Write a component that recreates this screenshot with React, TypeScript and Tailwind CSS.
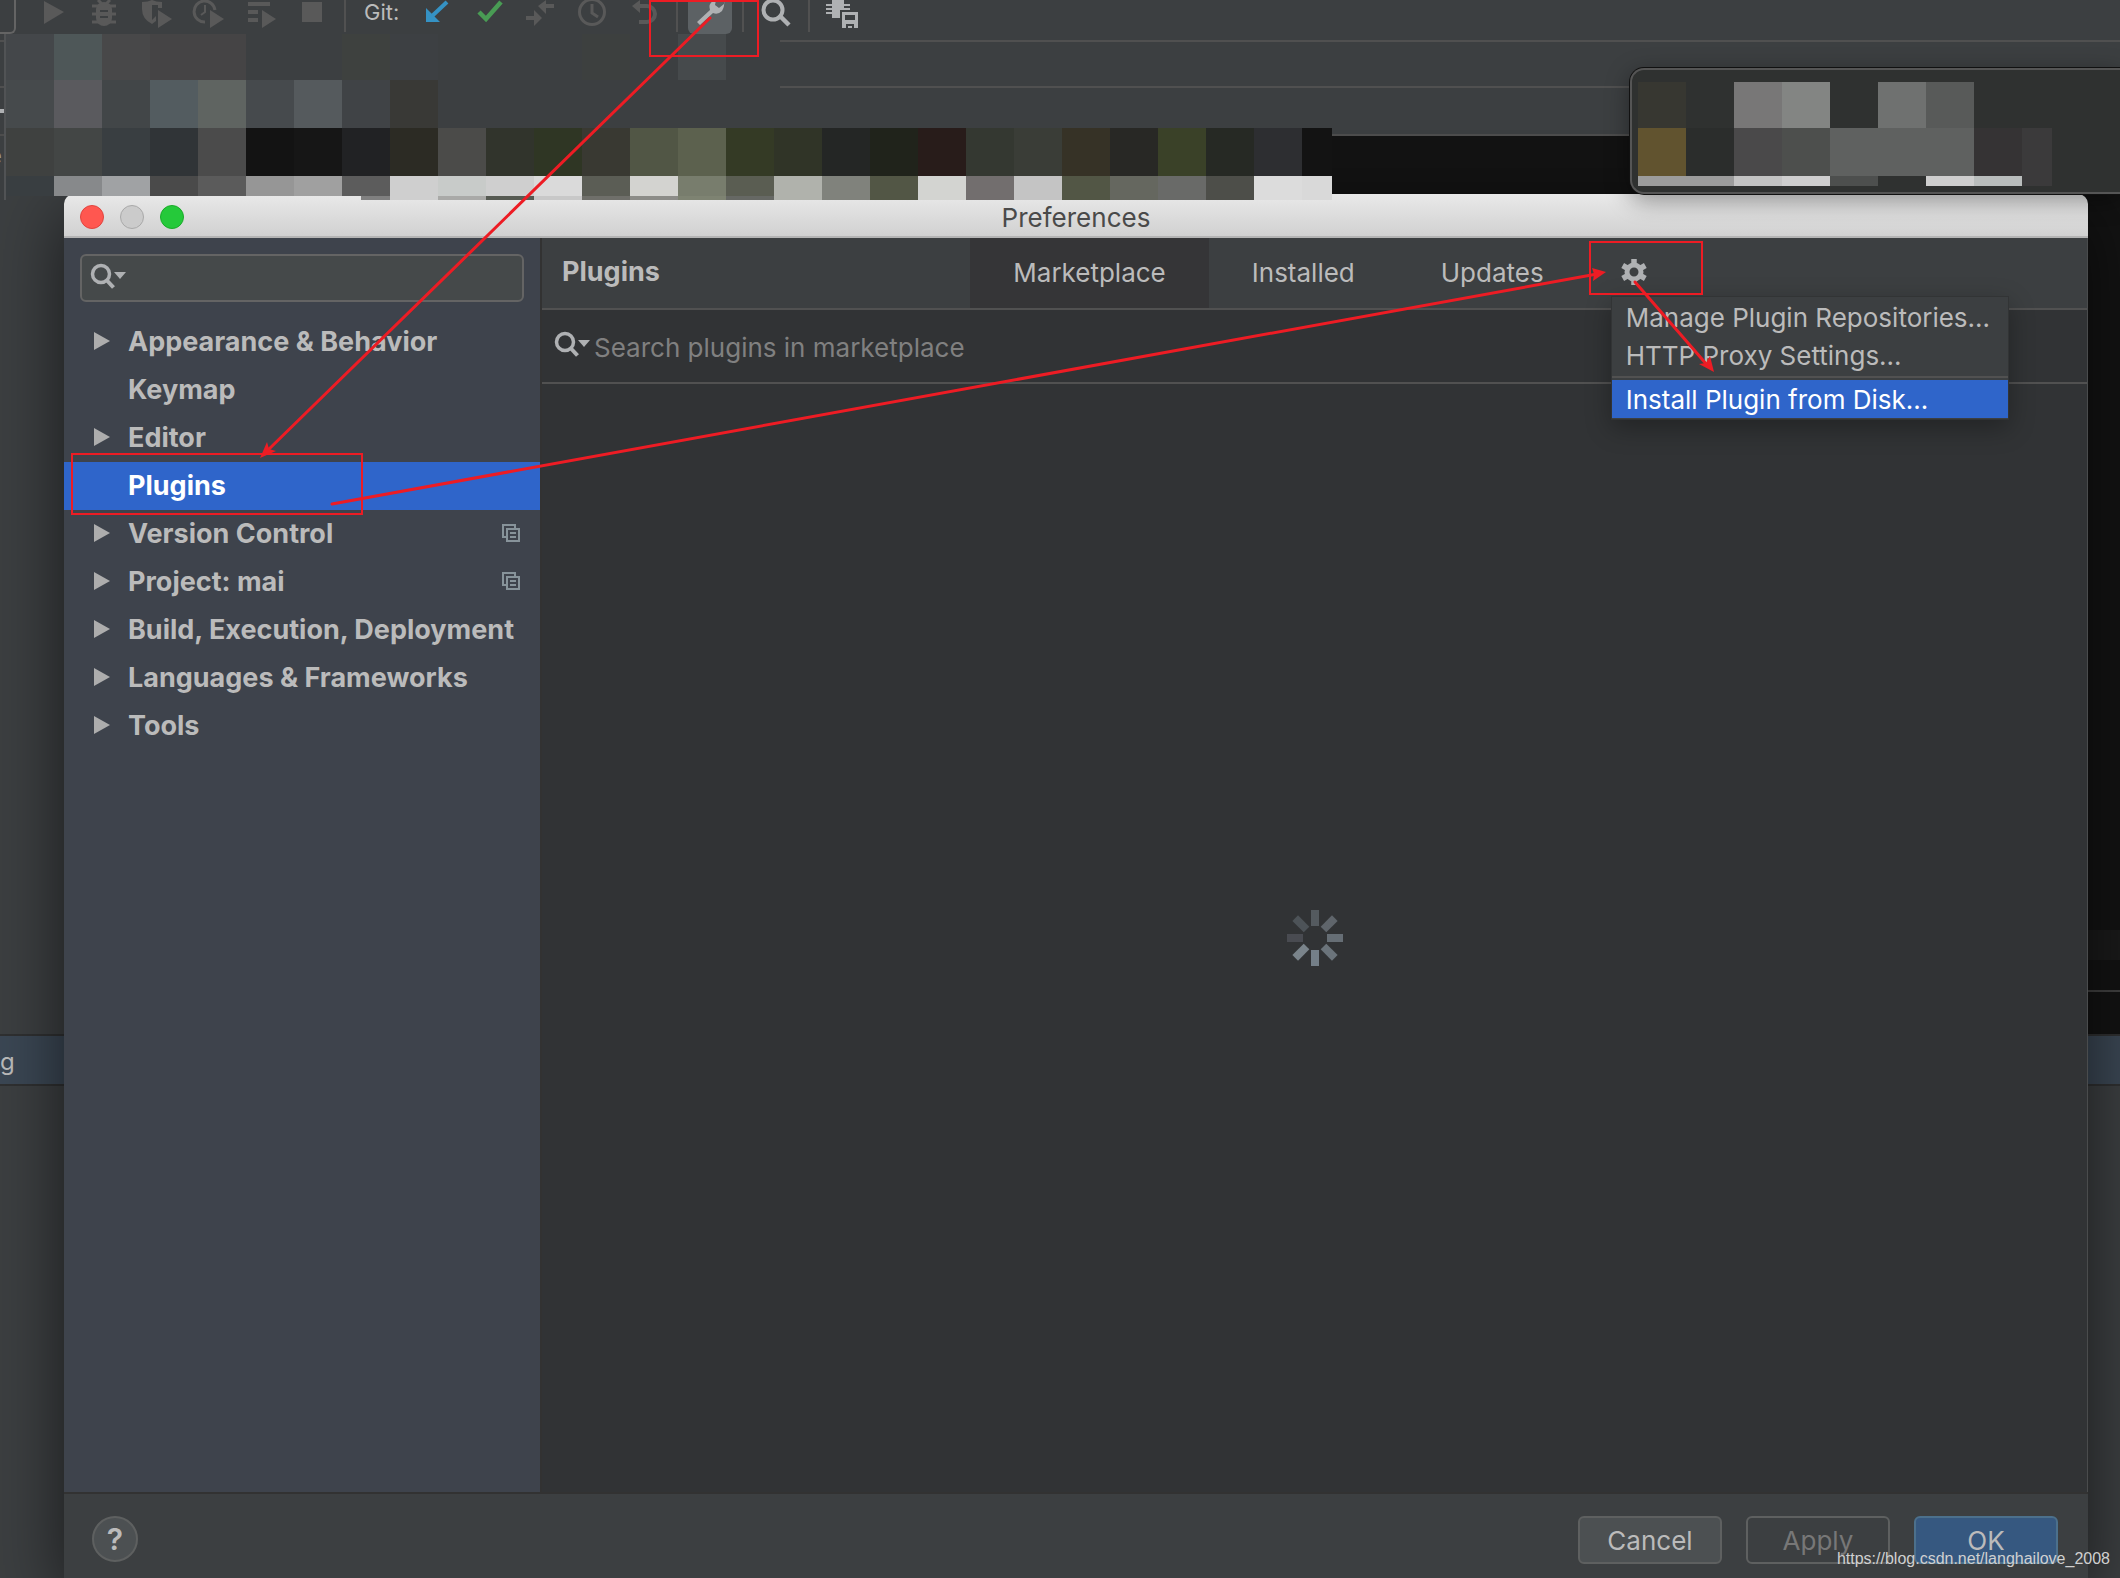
import { useState } from "react";
import type { ReactNode } from "react";

const TREE = [
  { label: "Appearance & Behavior", expandable: true },
  { label: "Keymap" },
  { label: "Editor", expandable: true },
  { label: "Plugins" },
  { label: "Version Control", expandable: true, perProject: true },
  { label: "Project: mai", expandable: true, perProject: true },
  { label: "Build, Execution, Deployment", expandable: true },
  { label: "Languages & Frameworks", expandable: true },
  { label: "Tools", expandable: true },
];

const TABS = ["Marketplace", "Installed", "Updates"];

// Pixelated blocks over the project name and editor tabs
const MOSAIC = [
  {
    height: "h-[46px]",
    cells: [
      "bg-[#44474a]", "bg-[#4e5758]", "bg-[#484849]", "bg-[#454445]", "bg-[#454445]", "bg-[#3c3f41]", "bg-[#3c3f41]",
      "bg-[#3e413f]", "bg-[#3d4043]", "bg-[#3c3f41]", "bg-[#3c3f41]", "bg-[#3c3f41]", "bg-[#3d403f]", "bg-[#3c3f41]",
      "bg-[#464a4c]", "bg-[#3c3f41]", "bg-linear-to-r from-[#3c3f41] from-12% to-transparent to-12%",
    ],
  },
  {
    height: "h-12",
    cells: [
      "bg-[#464a4c]", "bg-[#5a5a5e]", "bg-[#424648]", "bg-[#535c60]", "bg-[#5f6461]", "bg-[#464a4d]", "bg-[#555a5d]",
      "bg-[#404346]", "bg-[#393936]", "bg-[#3c3f41]", "bg-[#3c3f41]", "bg-[#3c3f41]", "bg-[#3c3f41]", "bg-[#3c3f41]",
      "bg-[#3c3f41]", "bg-[#3c3f41]", "bg-linear-to-r from-[#3c3f41] from-12% to-transparent to-12%",
    ],
  },
  {
    height: "h-12",
    cells: [
      "bg-[#3f4140]", "bg-[#434645]", "bg-[#393e41]", "bg-[#303437]", "bg-[#4b4b4b]", "bg-[#131313]", "bg-[#161616]",
      "bg-[#212224]", "bg-[#2c2b24]", "bg-[#4b4b49]", "bg-[#31342c]", "bg-[#2f3624]", "bg-[#393932]", "bg-[#515645]",
      "bg-[#5c614e]", "bg-[#343a25]", "bg-[#303427]", "bg-[#242625]", "bg-[#20231b]", "bg-[#281c1a]", "bg-[#343831]",
      "bg-[#3a3d37]", "bg-[#363226]", "bg-[#282825]", "bg-[#3a4128]", "bg-[#262924]", "bg-[#2d2e31]", "bg-[#131313]",
    ],
  },
  {
    height: "h-5",
    cells: [
      "bg-[#393e41]", "bg-[#87898b]", "bg-[#a0a2a4]", "bg-[#4a4a4a]", "bg-[#5b5b5b]", "bg-[#969696]", "bg-[#a0a0a0]",
      "bg-[#5c5c5c]", "bg-[#cfcfcf]", "bg-[#c8cbc9]", "bg-[#cfcfcf]", "bg-[#dadada]", "bg-[#5b5d55]", "bg-[#d3d3d0]",
      "bg-[#787d6d]", "bg-[#5a5d52]", "bg-[#b0b2ac]", "bg-[#80827c]", "bg-[#525645]", "bg-[#d3d4d1]", "bg-[#726e6e]",
      "bg-[#c4c4c4]", "bg-[#525645]", "bg-[#65675f]", "bg-[#696a68]", "bg-[#4d4e49]", "bg-[#dcdcdc]", "bg-[#d9d9d9]",
    ],
  },
  {
    height: "h-1",
    cells: [
      "", "", "", "", "", "", "", "bg-linear-to-r from-transparent from-40% to-[#808080] to-40%",
      "bg-[#cfcfcf]", "bg-[#a9a9a7]", "bg-[#565a52]", "bg-[#c8c8c8]", "bg-[#6f6f6a]", "bg-[#8c8c88]",
      "bg-[#7e8372]", "bg-[#666864]", "bg-[#b0b2ac]", "bg-[#80827c]", "bg-[#525645]", "bg-[#d3d4d1]", "bg-[#726e6e]",
      "bg-[#c4c4c4]", "bg-[#525645]", "bg-[#65675f]", "bg-[#696a68]", "bg-[#4d4e49]", "bg-[#dcdcdc]", "bg-[#d9d9d9]",
    ],
  },
];

const NOTICE_MOSAIC = [
  {
    height: "h-[46px]",
    cells: [
      "bg-[#373731]", "bg-[#2f3130]", "bg-[#787777]", "bg-[#838583]", "bg-[#2f3130]", "bg-[#6f7170]", "bg-[#585a59]",
      "bg-[#2f3130]",
    ],
  },
  {
    height: "h-12",
    cells: [
      "bg-[#61532f]", "bg-[#2b2d2c]", "bg-[#4a494a]", "bg-[#4d4f4d]", "bg-[#5f6160]", "bg-[#5f6160]", "bg-[#5f6160]",
      "bg-[#353334]", "bg-linear-to-r from-[#3b3a3b] from-62% to-transparent to-62%",
    ],
  },
  {
    height: "h-[10px]",
    cells: [
      "bg-[#9c9c9c]", "bg-[#9c9c9c]", "bg-[#c3c3c3]", "bg-[#cecece]", "bg-[#4d4f4e]", "bg-[#2f3130]", "bg-[#cecece]",
      "bg-[#b9bdbc]", "bg-linear-to-r from-[#3b3a3b] from-62% to-transparent to-62%",
    ],
  },
];

function Mosaic({ rows }: { rows: { height: string; cells: string[] }[] }) {
  return (
    <div aria-hidden="true">
      {rows.map((row, i) => (
        <div key={i} className={`flex ${row.height}`}>
          {row.cells.map((cell, j) => (
            <div key={j} className={`w-12 shrink-0 ${cell}`} />
          ))}
        </div>
      ))}
    </div>
  );
}

function ToolButton({ label, children }: { label: string; children: ReactNode }) {
  return (
    <button type="button" aria-label={label} className="w-[52px] shrink-0">
      <svg viewBox="0 0 52 34" className="block h-[34px] w-[52px]" fill="none">
        {children}
      </svg>
    </button>
  );
}

function Divider() {
  return <div className="h-8 w-0.5 shrink-0 bg-[#515151]" />;
}

function Toolbar() {
  return (
    <div className="flex h-10 items-start">
      <div className="mr-3 h-[34px] w-4 shrink-0 rounded-br-md border-r-2 border-b-2 border-[#646464]" />
      <ToolButton label="Run">
        <path d="M16 1L36 12L16 24Z" fill="#595959" />
      </ToolButton>
      <ToolButton label="Debug">
        <path d="M18 0l4 4M30 0l-4 4" stroke="#595959" strokeWidth="3" />
        <path d="M12 6h24M12 14h24M12 22h24" stroke="#595959" strokeWidth="3" />
        <path d="M16 9a8 7 0 0 1 16 0v9a8 8 0 0 1-16 0z" fill="#595959" />
        <path d="M20 11h8M20 17h8" stroke="#3c3f41" strokeWidth="2" />
      </ToolButton>
      <ToolButton label="Run with Coverage">
        <path d="M10 2Q16 2 20 0Q24 2 30 2V8H26V5H20V20L24 16V21L20 24Q10 19 10 9Z" fill="#595959" />
        <path d="M26 10L40 19L26 28Z" fill="#595959" />
      </ToolButton>
      <ToolButton label="Profile">
        <path d="M21 22A10.500 10.500 0 1 1 31 10" stroke="#595959" strokeWidth="3" />
        <path d="M21 5v7l-4 3" stroke="#595959" strokeWidth="2" />
        <path d="M26 10L40 19L26 28Z" fill="#595959" />
      </ToolButton>
      <ToolButton label="Run Configurations">
        <path d="M12 4h22M12 12h10M12 20h10" stroke="#595959" strokeWidth="4" />
        <path d="M26 10L40 19L26 28Z" fill="#595959" />
      </ToolButton>
      <ToolButton label="Stop">
        <rect x="14" y="2" width="20" height="20" fill="#595959" />
      </ToolButton>
      <div className="w-1 shrink-0" />
      <Divider />
      <span className="w-[65px] shrink-0 pl-[18px] text-[22px] leading-[25px] text-[#bbbbbb]">Git:</span>
      <ToolButton label="Update Project">
        <path d="M36 2L20 17" stroke="#3592c4" strokeWidth="4" />
        <path d="M15 8V22H29Z" fill="#3592c4" />
      </ToolButton>
      <ToolButton label="Commit">
        <path d="M16 12L23 19L38 2" stroke="#499c54" strokeWidth="4.500" />
      </ToolButton>
      <ToolButton label="Compare">
        <path d="M11 18h10M29 6h10" stroke="#595959" strokeWidth="4" />
        <path d="M19 10v16l8-8zM31 0v14l-8-8z" fill="#595959" />
      </ToolButton>
      <ToolButton label="History">
        <circle cx="25" cy="12" r="12.500" stroke="#595959" strokeWidth="3" />
        <path d="M25 4v9l6 4" stroke="#595959" strokeWidth="3" />
      </ToolButton>
      <ToolButton label="Rollback">
        <path d="M18 6h10a8 8 0 0 1 0 16h-8" stroke="#595959" strokeWidth="4" />
        <path d="M21 0v13l-8-7z" fill="#595959" />
      </ToolButton>
      <div className="w-[5px] shrink-0" />
      <Divider />
      <button type="button" aria-label="Settings" className="mx-[10px] h-[34px] w-11 shrink-0 rounded-b-md bg-[#5c6164]">
        <svg viewBox="0 0 44 34" className="block h-[34px] w-11">
          <path
            d="M9 22L22 10Q20 4 25 1L28 0L27 5L31 8L36 4V0Q37 6 34 11Q30 15 25 13L12 25Z"
            fill="#afb1b3"
          />
        </svg>
      </button>
      <Divider />
      <button type="button" aria-label="Search Everywhere" className="w-16 shrink-0">
        <svg viewBox="0 0 64 34" className="block h-[34px] w-16" fill="none" stroke="#afb1b3">
          <circle cx="29" cy="10" r="9.500" strokeWidth="4" />
          <path d="M35 15l10 10" strokeWidth="4.500" />
        </svg>
      </button>
      <Divider />
      <button type="button" aria-label="Save Profile" className="w-16 shrink-0">
        <svg viewBox="0 0 64 34" className="block h-[34px] w-16" fill="none">
          <path d="M16 5h24M16 9h24M16 13h14" stroke="#afb1b3" strokeWidth="2" />
          <path d="M22 0h12v10h-4v8h-8z" fill="#afb1b3" />
          <path d="M32 12h16v16H32z" fill="#afb1b3" />
          <path d="M35 15h10v5H35zM36 24h8v4h-2v-2h-4v2h-2z" fill="#3c3f41" />
        </svg>
      </button>
    </div>
  );
}

// IDE window behind the dialog
function Workspace() {
  return (
    <div className="flex min-h-screen flex-col bg-[#3c3f41]">
      <Toolbar />
      <div className="h-12 border-y-2 border-[#505050]" />
      <div className="flex h-12 items-center border-b-2 border-[#4d4d4d]">
        <div className="h-1 w-1 bg-[#afb1b3]" />
      </div>
      <div className="flex flex-1">
        <div className="w-[246px] shrink-0">
          <div className="flex w-0.5 justify-end overflow-hidden pt-1 text-2xl text-[#9a9a9a]">e</div>
        </div>
        <div className="flex flex-1 flex-col bg-[#131313]">
          <div className="flex-1" />
          <div className="h-[30px] bg-[#1a1a1a]" />
          <div className="h-8 border-b-2 border-[#414141]" />
          <div className="h-[42px]" />
        </div>
      </div>
      <div className="flex h-[52px] items-center border-y-2 border-[#2f3031] bg-[#3b4754] pt-1 text-2xl text-[#bbbbbb]">
        g
      </div>
      <div className="h-[492px]" />
    </div>
  );
}

function SearchIcon() {
  return (
    <svg viewBox="0 0 36 26" className="mb-1 h-[26px] w-9 shrink-0" fill="none">
      <circle cx="11" cy="11" r="8.500" stroke="#afb1b3" strokeWidth="3.500" />
      <path d="M16.500 17L23.500 24.500" stroke="#afb1b3" strokeWidth="4" />
      <path d="M24 9h12l-6 7z" fill="#afb1b3" />
    </svg>
  );
}

function PerProjectIcon() {
  return (
    <svg viewBox="0 0 18 18" className="mb-0.5 h-[18px] w-[18px]" fill="none" stroke="#87939a" strokeWidth="2">
      <path d="M4 13H1V1h12v3" />
      <path d="M5 5h12v12H5zM8 9h6M8 13h6" />
    </svg>
  );
}

function Sidebar({ selected, onSelect }: { selected: string; onSelect: (label: string) => void }) {
  return (
    <aside className="w-[478px] shrink-0 border-r-2 border-[#323232] bg-[#3e434c]">
      <div className="mx-4 mt-4 flex h-12 items-center rounded-md border-2 border-[#646464] bg-[#45494a] px-2">
        <SearchIcon />
        <input
          type="text"
          aria-label="Search settings"
          className="ml-1 min-w-0 flex-1 bg-transparent text-[#bbbbbb] outline-none"
        />
      </div>
      <ul className="mt-4">
        {TREE.map((item) => (
          <li key={item.label}>
            <button
              type="button"
              onClick={() => onSelect(item.label)}
              className={`flex h-12 w-full items-center pr-5 pl-[30px] text-left text-[27px] font-bold ${
                item.label === selected ? "bg-[#2f65ca] text-white" : "text-[#bbbbbb]"
              }`}
            >
              <span className="w-[34px] shrink-0">
                {item.expandable && (
                  <svg viewBox="0 0 16 18" className="mb-0.5 block h-[18px] w-4">
                    <path d="M0 0L16 9L0 18Z" fill="#adadad" />
                  </svg>
                )}
              </span>
              <span className="flex-1 whitespace-nowrap">{item.label}</span>
              {item.perProject && <PerProjectIcon />}
            </button>
          </li>
        ))}
      </ul>
    </aside>
  );
}

function GearMenu() {
  return (
    <div className="absolute top-[58px] left-6 w-[398px] border border-[#323435] bg-[#3c3f41] py-px whitespace-nowrap shadow-[0_8px_24px_rgba(0,0,0,0.3)]">
      <button type="button" className="block h-[38px] w-full pl-[14px] text-left">
        Manage Plugin Repositories...
      </button>
      <button type="button" className="block h-[38px] w-full pl-[14px] text-left">
        HTTP Proxy Settings...
      </button>
      <div className="my-0.5 h-0.5 bg-[#515151]" />
      <button type="button" className="block h-[38px] w-full bg-[#2f65ca] pl-[14px] text-left text-white">
        Install Plugin from Disk...
      </button>
    </div>
  );
}

function Spinner() {
  return (
    <svg viewBox="0 0 56 56" className="h-14 w-14">
      <rect x="24" y="0" width="8" height="16" fill="#545a5f" />
      <rect x="24" y="0" width="8" height="16" fill="#5f656b" transform="rotate(45 28 28)" />
      <rect x="24" y="0" width="8" height="16" fill="#666e75" transform="rotate(90 28 28)" />
      <rect x="24" y="0" width="8" height="16" fill="#6b747b" transform="rotate(135 28 28)" />
      <rect x="24" y="0" width="8" height="16" fill="#747f88" transform="rotate(180 28 28)" />
      <rect x="24" y="0" width="8" height="16" fill="#7a848b" transform="rotate(225 28 28)" />
      <rect x="24" y="0" width="8" height="16" fill="#494b51" transform="rotate(270 28 28)" />
      <rect x="24" y="0" width="8" height="16" fill="#4d5358" transform="rotate(315 28 28)" />
    </svg>
  );
}

function PluginsPage() {
  const [tab, setTab] = useState("Marketplace");

  return (
    <section className="flex min-w-0 flex-1 flex-col border-r border-[#4a4c4d] bg-[#313335]">
      <div className="grid h-[72px] grid-cols-[1fr_auto_1fr] border-b-2 border-[#515151] bg-[#3c3f41]">
        <h1 className="self-center pb-0.5 pl-5 text-[27px] font-bold">Plugins</h1>
        <div className="flex">
          {TABS.map((name) => (
            <button
              key={name}
              type="button"
              onClick={() => setTab(name)}
              className={`px-[43px] pb-0.5 ${name === tab ? "bg-[#353537]" : ""}`}
            >
              {name}
            </button>
          ))}
          <div className="relative flex">
            <button type="button" aria-label="Plugin settings" className="pr-3 pb-0.5 pl-[34px]">
              <svg viewBox="0 0 26 26" className="h-[26px] w-[26px]" fill="none">
                <circle cx="13" cy="13" r="7" stroke="#afb1b3" strokeWidth="5" />
                <path
                  d="M13 0v5M13 21v5M1.700 6.500l4.300 2.500M20 17l4.300 2.500M1.700 19.500L6 17M20 9l4.300-2.500"
                  stroke="#afb1b3"
                  strokeWidth="5.500"
                />
              </svg>
            </button>
            <GearMenu />
          </div>
        </div>
      </div>
      <div className="flex h-[74px] items-center border-b-2 border-[#515151] pl-3">
        <SearchIcon />
        <input
          type="text"
          aria-label="Search plugins"
          placeholder="Search plugins in marketplace"
          className="ml-1 min-w-0 flex-1 bg-transparent pt-0.5 outline-none placeholder:text-[#808080]"
        />
      </div>
      <div className="flex flex-1 items-center justify-center">
        <Spinner />
      </div>
    </section>
  );
}

function Preferences() {
  const [selected, setSelected] = useState("Plugins");

  return (
    <div className="absolute top-[194px] right-8 bottom-0 left-16 flex flex-col rounded-t-[10px] bg-[#3c3f41] text-[26px] text-[#bbbbbb] shadow-[0_20px_70px_rgba(0,0,0,0.6)]">
      <header className="grid h-11 grid-cols-[1fr_auto_1fr] items-center rounded-t-[10px] border-b-2 border-[#b4b4b4] bg-linear-to-b from-[#e9e9e9] to-[#d1d1d1] pt-0.5 text-[#4a4a4a]">
        <div className="flex gap-4 pl-4">
          <button type="button" aria-label="Close" className="h-6 w-6 rounded-full border border-[#e0443e] bg-[#ff5750]" />
          <button type="button" aria-label="Minimize" className="h-6 w-6 rounded-full border border-[#a9a9a9] bg-[#cbcbcb]" />
          <button type="button" aria-label="Zoom" className="h-6 w-6 rounded-full border border-[#1aab29] bg-[#25c93a]" />
        </div>
        <div className="pt-0.5">Preferences</div>
      </header>
      <div className="flex flex-1">
        <Sidebar selected={selected} onSelect={setSelected} />
        <PluginsPage />
      </div>
      <footer className="flex h-[86px] items-start gap-6 border-t-2 border-[#323232] pt-[22px] pr-[30px] pl-7">
        <button
          type="button"
          aria-label="Help"
          className="mr-auto h-[46px] w-[46px] rounded-full border-2 border-[#5e6060] bg-[#4c5052] text-3xl font-semibold"
        >
          ?
        </button>
        <button type="button" className="h-12 w-36 rounded-md border-2 border-[#5e6060] bg-[#4c5052]">
          Cancel
        </button>
        <button type="button" disabled className="h-12 w-36 rounded-md border-2 border-[#5e6060] text-[#777777]">
          Apply
        </button>
        <button type="button" className="h-12 w-36 rounded-md border-2 border-[#4c708c] bg-[#365880]">
          OK
        </button>
      </footer>
    </div>
  );
}

// Hand-drawn red boxes and arrows that show the click order
function Annotations() {
  return (
    <svg className="pointer-events-none absolute top-0 left-0 h-[600px] w-[1800px]" fill="none" stroke="#ed1c24">
      <g strokeWidth="2">
        <path d="M650 1h108v55H650z" />
        <path d="M72 454h290v60H72z" />
        <path d="M1590 242h112v52h-112z" />
      </g>
      <g strokeWidth="3" strokeLinecap="round">
        <path d="M710 18L267 451" />
        <path d="M332 504L1597 274" />
        <path d="M1635 282L1708 366" />
      </g>
      <g fill="#ed1c24" stroke="none">
        <path d="M260 458L267 442L269 449L276 451Z" />
        <path d="M1606 272L1592 268L1594 274L1593 281Z" />
        <path d="M1714 372L1699 364L1706 363L1710 356Z" />
      </g>
    </svg>
  );
}

export default function App() {
  return (
    <main className="relative min-h-screen w-full overflow-hidden font-['Inter','Liberation_Sans',sans-serif]">
      <Workspace />
      <Preferences />
      <div className="absolute top-[34px] left-1 w-[1328px] overflow-hidden border-l-2 border-[#515355]">
        <Mosaic rows={MOSAIC} />
      </div>
      <div className="absolute top-[68px] right-0 h-[126px] w-[490px] rounded-l-[14px] border-y-2 border-l-2 border-[#555555] bg-[#2f3130] pt-3 pl-1.5 shadow-[0_0_0_1px_#111111,0_6px_24px_rgba(0,0,0,0.4)]">
        <Mosaic rows={NOTICE_MOSAIC} />
      </div>
      <Annotations />
      <a
        href="https://blog.csdn.net/langhailove_2008"
        className="absolute right-[10px] bottom-[7px] font-['Liberation_Sans',sans-serif] text-base text-[#d0d0d0]"
      >
        https://blog.csdn.net/langhailove_2008
      </a>
    </main>
  );
}
